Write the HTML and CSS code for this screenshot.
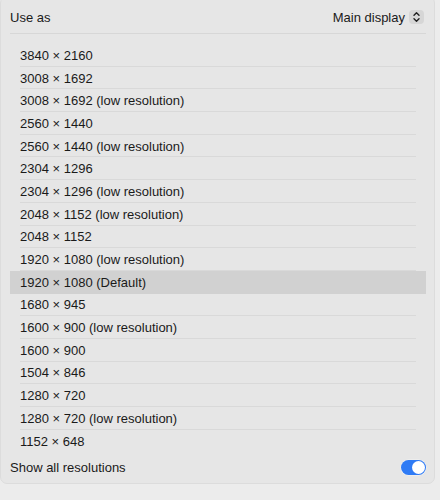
FILE: index.html
```html
<!DOCTYPE html>
<html lang="en">
<head>
    <meta charset="UTF-8">
    <meta name="viewport" content="width=device-width, initial-scale=1.0">
    <title>Display resolutions</title>
    <link rel="stylesheet" href="styles.css">
</head>
<body>
    <div class="panel">
        <div class="header">
            <span class="label">Use as</span>
            <div class="select">
                <span class="value">Main display</span>
                <span class="stepper">
                    <svg width="15" height="14" viewBox="0 0 15 14">
                        <path d="M5 5.2 L7.5 2.8 L10 5.2" fill="none" stroke="#1e1e1e" stroke-width="1.4" stroke-linecap="round" stroke-linejoin="round"/>
                        <path d="M5 8.8 L7.5 11.2 L10 8.8" fill="none" stroke="#1e1e1e" stroke-width="1.4" stroke-linecap="round" stroke-linejoin="round"/>
                    </svg>
                </span>
            </div>
        </div>
        <ul class="list">
            <li class="item">3840 × 2160</li>
            <li class="item">3008 × 1692</li>
            <li class="item">3008 × 1692 (low resolution)</li>
            <li class="item">2560 × 1440</li>
            <li class="item">2560 × 1440 (low resolution)</li>
            <li class="item">2304 × 1296</li>
            <li class="item">2304 × 1296 (low resolution)</li>
            <li class="item">2048 × 1152 (low resolution)</li>
            <li class="item">2048 × 1152</li>
            <li class="item">1920 × 1080 (low resolution)</li>
            <li class="item selected">1920 × 1080 (Default)</li>
            <li class="item">1680 × 945</li>
            <li class="item">1600 × 900 (low resolution)</li>
            <li class="item">1600 × 900</li>
            <li class="item">1504 × 846</li>
            <li class="item">1280 × 720</li>
            <li class="item">1280 × 720 (low resolution)</li>
            <li class="item">1152 × 648</li>
        </ul>
        <div class="footer">
            <span class="label">Show all resolutions</span>
            <span class="toggle on"><span class="knob"></span></span>
        </div>
    </div>
</body>
</html>
```

FILE: styles.css
```css
* {
    margin: 0;
    padding: 0;
    box-sizing: border-box;
}

body {
    font-family: "Liberation Sans", Arial, sans-serif;
    font-size: 13px;
    color: #1a1a1a;
    background-color: #ececec;
    width: 440px;
    height: 500px;
    overflow: hidden;
}

.panel {
    width: 435px;
    margin-top: -4px;
    margin-left: 0;
    padding: 0 8px 0 9px;
    background-color: #e6e6e6;
    border: 1px solid #dcdcdc;
    border-radius: 7px;
}

.header {
    height: 37px;
    padding-top: 4px;
    display: flex;
    align-items: center;
    justify-content: space-between;
    border-bottom: 1px solid #d7d7d7;
}

.select {
    display: flex;
    align-items: center;
}

.stepper {
    display: flex;
    width: 15px;
    height: 14px;
    margin-left: 4px;
    margin-right: 2px;
    border-radius: 4px;
    background-color: #d6d6d6;
}

.list {
    list-style: none;
    margin-top: 10px;
}

.item {
    height: 22.7px;
    margin: 0 10px;
    display: flex;
    align-items: center;
    border-bottom: 1px solid #d9d9d9;
    padding-top: 1px;
}

.item:last-child {
    border-bottom: none;
}

.item.selected {
    margin: 0;
    padding-left: 10px;
    background-color: #d1d1d1;
    border-bottom-color: transparent;
}

.footer {
    height: 31px;
    display: flex;
    align-items: center;
    justify-content: space-between;
    padding-bottom: 1px;
}

.toggle {
    display: flex;
    align-items: center;
    width: 25px;
    height: 15px;
    border-radius: 8px;
    background-color: #2f7bf5;
    padding: 1px;
    box-shadow: 0 0 0 0.5px #f4f4f4;
}

.toggle.on {
    justify-content: flex-end;
}

.knob {
    width: 13px;
    height: 13px;
    border-radius: 50%;
    background-color: white;
}
```
